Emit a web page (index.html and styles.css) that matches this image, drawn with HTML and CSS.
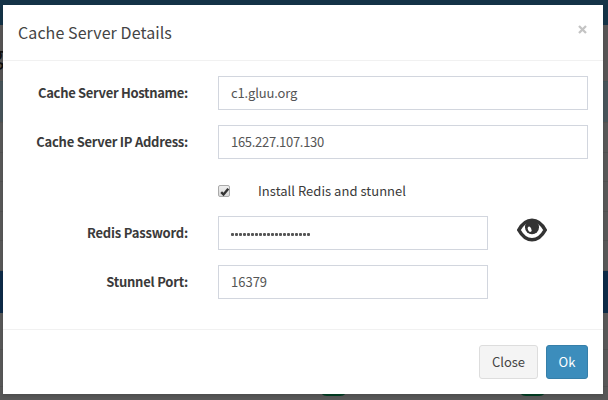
FILE: index.html
```html
<!DOCTYPE html>
<html lang="en">
<head>
<meta charset="utf-8">
<title>Cache Server Details</title>
<link rel="stylesheet" href="styles.css">
</head>
<body>
<div class="page">
  <div class="topbar"></div>
  <div class="heading"><span class="heading-text">g</span></div>
  <div class="notice"></div>
  <div class="panel"><i></i><i></i><i></i><i></i></div>
  <div class="table-head"></div>
  <div class="table-row"></div>
  <div class="table-row"></div>
  <div class="statuses"><span class="pill"></span><span class="pill"></span></div>
</div>
<div class="modal">
  <header class="modal-header">
    <h4 class="title">Cache Server Details</h4>
    <button class="dismiss" aria-label="Close"><svg width="9" height="9" viewBox="0 0 9 9"><path d="M1 1l7 7M8 1l-7 7"/></svg></button>
  </header>
  <form class="modal-body">
    <div class="row"><label class="label l1">Cache Server Hostname:</label><div class="field wide host">c1.gluu.org</div></div>
    <div class="row"><label class="label l2">Cache Server IP Address:</label><div class="field wide ip">165.227.107.130</div></div>
    <div class="row check-row">
      <span class="checkbox"><svg width="12" height="12" viewBox="0 0 12 12"><path d="M2.2 6.200l2.300 2.300 4.800-5.700"/></svg></span>
      <span class="check-text">Install Redis and stunnel</span>
    </div>
    <div class="row"><label class="label l3">Redis Password:</label><div class="field"><span class="dots"><i></i><i></i><i></i><i></i><i></i><i></i><i></i><i></i><i></i><i></i><i></i><i></i><i></i><i></i><i></i><i></i><i></i><i></i><i></i><i></i></span></div>
      <svg class="eye" width="30" height="24" viewBox="0 0 30 24">
        <path class="lid" d="M1.8 12C5.500 5.300 10 2.200 15 2.200s9.500 3.100 13.200 9.800C24.500 18.700 20 21.800 15 21.800S5.500 18.700 1.800 12z"/>
        <circle class="iris" cx="15" cy="9.300" r="7"/>
        <ellipse class="glint" cx="12.600" cy="11.300" rx="1.700" ry="2.800" transform="rotate(-25 12.600 11.300)"/>
      </svg>
    </div>
    <div class="row"><label class="label l4">Stunnel Port:</label><div class="field">16379</div></div>
  </form>
  <footer class="modal-footer"><button class="btn">Close</button><button class="btn primary">Ok</button></footer>
</div>
</body>
</html>
```
FILE: styles.css
```css
* { box-sizing: border-box; }
body {
  margin: 0;
  width: 608px;
  height: 400px;
  overflow: hidden;
  background: #585858;
  color: #3a3a3a;
  font: 13px/20px "Noto Sans CJK JP", "Noto Sans", sans-serif;
}
.page { height: 400px; display: flex; flex-direction: column; }
.topbar { height: 25px; background: #143347; }
.heading { height: 56px; background: #575555; padding-top: 15px; }
.heading-text { display: block; margin-left: -9px; color: #111; font-size: 23px; line-height: 28px; }
.notice { height: 42px; background: #48545a; border-top: 1px solid #435357; border-bottom: 1px solid #57524f; }
.panel { height: 148px; display: flex; flex-direction: column; justify-content: space-evenly; border-bottom: 1px solid #515151; }
.panel i { height: 1px; background: #515151; }
.table-head { height: 42px; background: #0e2b48; }
.table-row { height: 37px; border-bottom: 1px solid #515151; }
.statuses { display: flex; gap: 170px; padding-left: 319px; }
.pill { width: 29px; height: 9px; border-radius: 0 0 8px 8px; background: #003f23; }
.modal {
  position: absolute;
  left: 3px;
  top: 5px;
  width: 600px;
  height: 389px;
  display: flex;
  flex-direction: column;
  background: #fff;
  box-shadow: 0 2px 3px rgba(0, 0, 0, .125);
}
.modal-header { height: 56px; display: flex; justify-content: space-between; padding: 15px; border-bottom: 1px solid #f1f1f1; }
.title { margin: 0; color: #444; font-size: 16px; font-weight: 400; line-height: 25px; letter-spacing: .08px; }
.dismiss { width: 11px; height: 11px; padding: 0; margin: 4px 0 0; border: 0; background: none; display: grid; place-items: center; }
.dismiss svg { fill: none; stroke: #c4c4c4; stroke-width: 2.3; }
.modal-body { height: 268px; padding: 15px; display: flex; flex-direction: column; gap: 15px; }
.row { height: 34px; display: flex; align-items: center; flex: none; }
.label { width: 170px; margin-right: 30px; text-align: right; font-weight: 700; }
.l1 { letter-spacing: -.31px; }
.l2 { letter-spacing: -.27px; }
.l3 { letter-spacing: -.2px; }
.l4 { letter-spacing: -.22px; }
.field { width: 270px; height: 34px; padding: 6px 12px; border: 1px solid #d2d6de; color: #555; }
.wide { width: 370px; }
.host { letter-spacing: -.15px; }
.ip { letter-spacing: -.3px; }
.check-row { height: 27px; padding: 6px 0 0 200px; }
.checkbox { width: 12px; height: 12px; display: grid; place-items: center; border: 1px solid #aaa; border-radius: 2px; background: linear-gradient(#eee, #d9d9d9); }
.checkbox svg { fill: none; stroke: #333; stroke-width: 2.4; }
.check-text { margin-left: 28px; letter-spacing: .03px; }
.dots { display: flex; gap: 1px; padding-top: 10px; }
.dots i { width: 3px; height: 3px; border-radius: 1px; background: #555; }
.eye { margin: -6px 0 0 29px; }
.lid { fill: none; stroke: #333; stroke-width: 3.6; }
.iris { fill: #333; }
.glint { fill: #fff; }
.modal-footer { height: 65px; display: flex; justify-content: flex-end; gap: 8px; padding: 15px; border-top: 1px solid #f1f1f1; }
.btn { height: 34px; width: 59px; padding: 0; border: 1px solid #ddd; border-radius: 3px; background: #f4f4f4; color: #444; font: inherit; }
.primary { width: 42px; border-color: #367fa9; background: #3c8dbc; color: #fff; }
```
